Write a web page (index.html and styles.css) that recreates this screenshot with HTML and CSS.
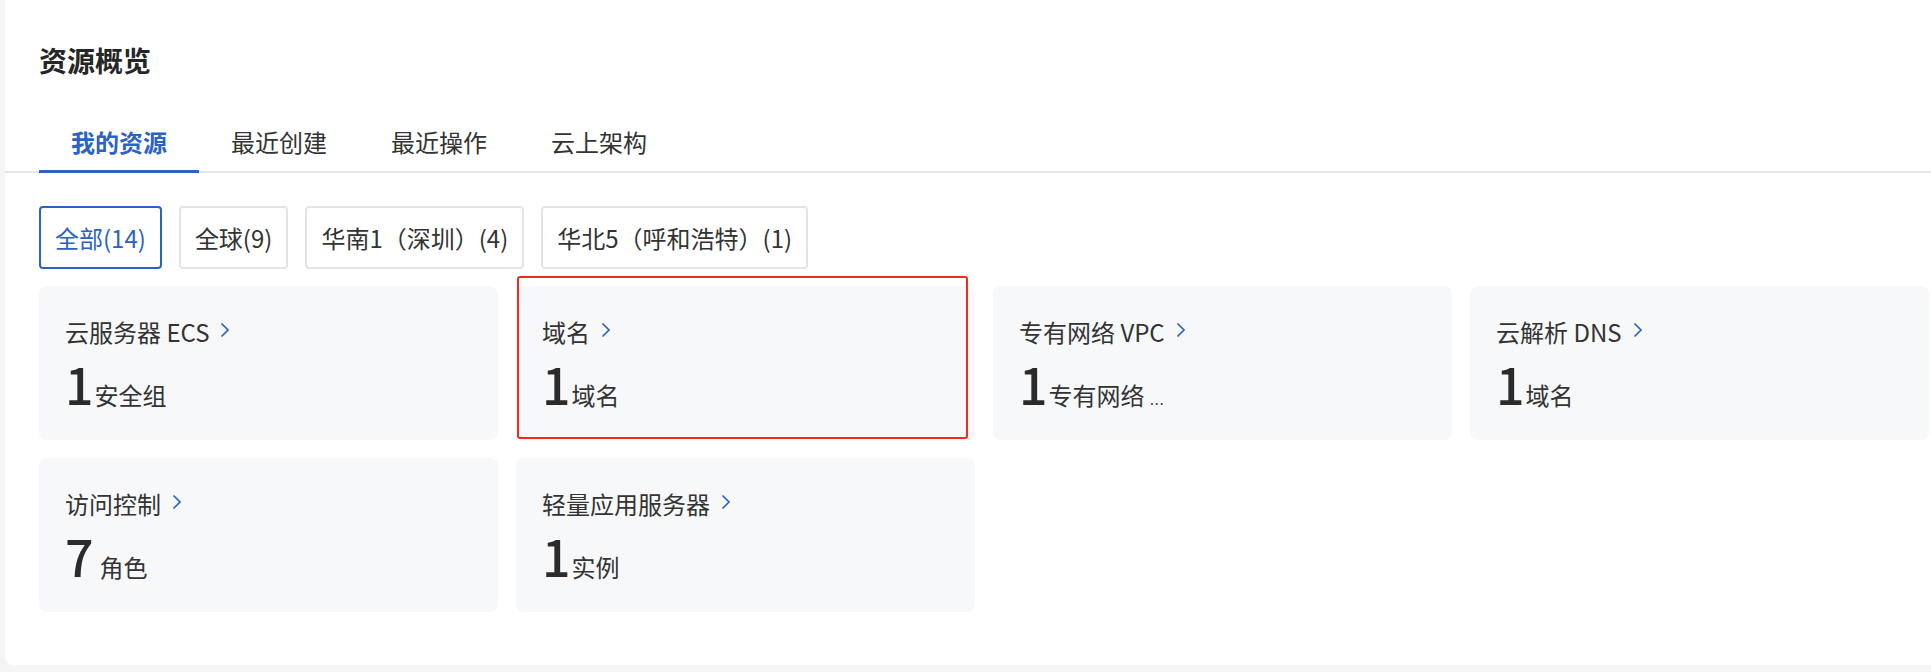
FILE: index.html
```html
<!DOCTYPE html>
<html lang="zh-CN">
<head>
<meta charset="utf-8">
<title>资源概览</title>
<link rel="stylesheet" href="styles.css">
</head>
<body>
<div class="panel">
  <h2 class="panel-title">资源概览</h2>
  <div class="tabs">
    <div class="tab active">我的资源</div>
    <div class="tab">最近创建</div>
    <div class="tab">最近操作</div>
    <div class="tab">云上架构</div>
  </div>
  <div class="filters">
    <div class="chip active">全部(14)</div>
    <div class="chip">全球(9)</div>
    <div class="chip">华南1（深圳）(4)</div>
    <div class="chip">华北5（呼和浩特）(1)</div>
  </div>
  <div class="grid">
    <div class="card">
      <div class="card-title">云服务器 ECS<svg class="chev" viewBox="0 0 10 16"><path d="M1.5 1.5 L8 8 L1.5 14.5"/></svg></div>
      <div class="card-value"><span class="num">1</span><span class="unit">安全组</span></div>
    </div>
    <div class="card highlight">
      <div class="card-title">域名<svg class="chev" viewBox="0 0 10 16"><path d="M1.5 1.5 L8 8 L1.5 14.5"/></svg></div>
      <div class="card-value"><span class="num">1</span><span class="unit">域名</span></div>
      <span class="mark"></span>
    </div>
    <div class="card">
      <div class="card-title">专有网络 VPC<svg class="chev" viewBox="0 0 10 16"><path d="M1.5 1.5 L8 8 L1.5 14.5"/></svg></div>
      <div class="card-value"><span class="num">1</span><span class="unit">专有网络 <span class="dots">...</span></span></div>
    </div>
    <div class="card">
      <div class="card-title">云解析 DNS<svg class="chev" viewBox="0 0 10 16"><path d="M1.5 1.5 L8 8 L1.5 14.5"/></svg></div>
      <div class="card-value"><span class="num">1</span><span class="unit">域名</span></div>
    </div>
    <div class="card">
      <div class="card-title">访问控制<svg class="chev" viewBox="0 0 10 16"><path d="M1.5 1.5 L8 8 L1.5 14.5"/></svg></div>
      <div class="card-value"><span class="num">7</span><span class="unit unit-wide">角色</span></div>
    </div>
    <div class="card">
      <div class="card-title">轻量应用服务器<svg class="chev" viewBox="0 0 10 16"><path d="M1.5 1.5 L8 8 L1.5 14.5"/></svg></div>
      <div class="card-value"><span class="num">1</span><span class="unit">实例</span></div>
    </div>
  </div>
</div>
</body>
</html>
```

FILE: styles.css
```css
html, body {
  margin: 0;
  padding: 0;
}
body {
  background: #f4f5f7;
  overflow: hidden;
  font-family: "Noto Sans CJK SC", "Noto Sans", sans-serif;
  color: #333;
}
.panel {
  margin-left: 5px;
  width: 1926px;
  box-sizing: border-box;
  background: #fff;
  border-radius: 0 0 0 8px;
  padding: 40px 2px 53px 34px;
}
.panel-title {
  margin: 0;
  font-size: 28px;
  line-height: 40px;
  font-weight: 700;
  color: #262626;
}
.tabs {
  display: flex;
  margin: 45px -2px 0 -34px;
  padding-left: 34px;
  border-bottom: 2px solid #e5e6e8;
}
.tab {
  position: relative;
  width: 160px;
  text-align: center;
  font-size: 24px;
  line-height: 34px;
  padding-bottom: 12px;
  color: #333;
}
.tab.active {
  color: #2a62c6;
  font-weight: 700;
}
.tab.active::after {
  content: "";
  position: absolute;
  left: 0;
  right: 0;
  bottom: -2px;
  height: 3px;
  background: #2a62c6;
}
.filters {
  display: flex;
  gap: 17px;
  margin-top: 33px;
}
.chip {
  height: 63px;
  box-sizing: border-box;
  display: flex;
  align-items: center;
  padding: 0 14px;
  border: 2px solid #e3e4e7;
  border-radius: 4px;
  font-size: 24px;
  color: #333;
  background: #fff;
}
.chip.active {
  border-color: #2a62c6;
  color: #2a62c6;
}
.grid {
  display: grid;
  grid-template-columns: repeat(4, 1fr);
  gap: 18px;
  margin-top: 17px;
  width: 1890px;
}
.card {
  position: relative;
  background: #f7f8fa;
  border-radius: 8px;
  padding: 29px 26px 32px;
}
.card-title {
  display: flex;
  align-items: center;
  font-size: 24px;
  line-height: 34px;
  color: #333;
}
.chev {
  width: 10px;
  height: 16px;
  margin-left: 11px;
  margin-top: -4px;
}
.chev path {
  fill: none;
  stroke: #2a62c6;
  stroke-width: 1.7;
}
.card-value {
  display: flex;
  align-items: baseline;
  height: 50px;
  margin-top: 9px;
}
.num {
  font-size: 50px;
  line-height: 50px;
  font-weight: 500;
  color: #2b2b2b;
}
.unit {
  font-size: 24px;
  line-height: 24px;
  margin-left: 1px;
  color: #333;
}
.unit-wide {
  margin-left: 6px;
}
.dots {
  font-size: 14px;
  letter-spacing: 1px;
}
.mark {
  position: absolute;
  left: 1px;
  top: -10px;
  width: 451px;
  height: 163px;
  box-sizing: border-box;
  border: 2px solid #f42a1e;
  border-radius: 3px;
}
```
